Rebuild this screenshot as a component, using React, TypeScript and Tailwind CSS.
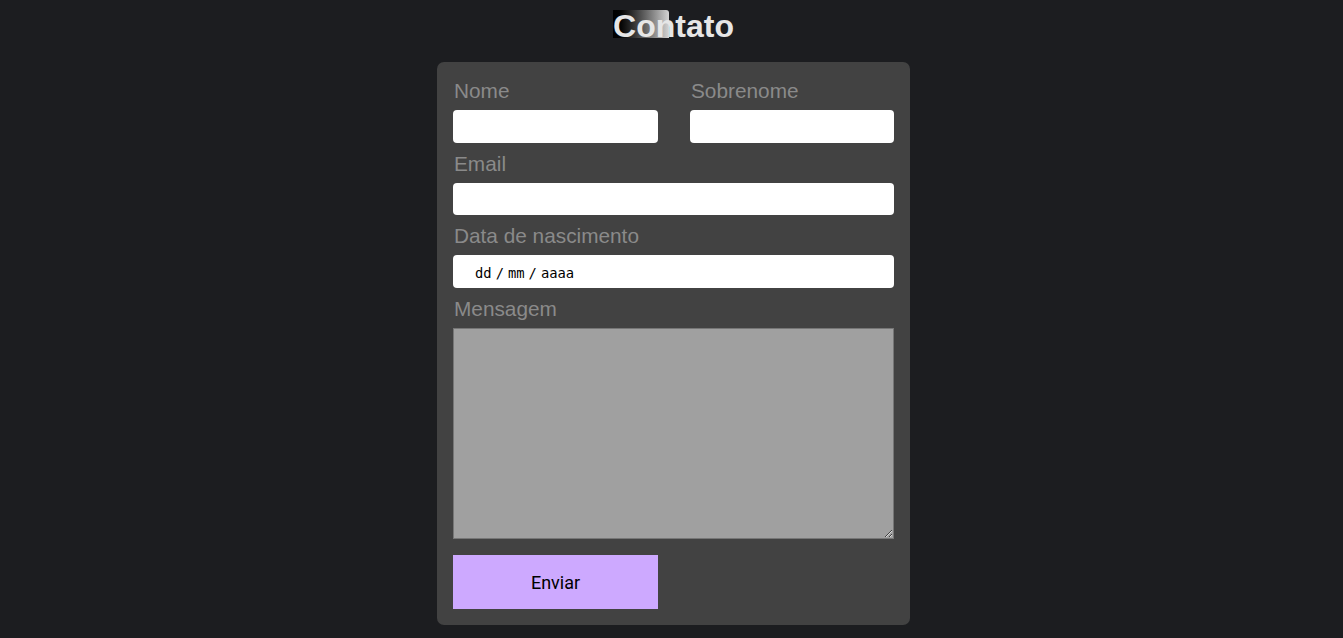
import React from "react";

export default function App() {
  const label = "block text-[20.8px] leading-[24px] text-[#8a8a8a] pt-[1px] mb-[7px] pl-[1px]";
  const input = "block w-full bg-white rounded-[4px] outline-none border-0 px-2";
  return (
    <div
      className="min-h-[638px] w-full bg-[#1c1d20] flex flex-col items-center pl-[4px]"
      style={{ fontFamily: '"Liberation Sans", Arial, sans-serif' }}
    >
      <h1 className="relative mt-[8px] h-[37px] text-[32px] leading-[37px] font-bold text-[#e6e6e6]">
        <span className="absolute left-0 top-[2px] h-[28px] w-[56px] rounded-tr-[3px] bg-gradient-to-r from-black to-[#d4d4d4]" />
        <span className="relative">Contato</span>
      </h1>
      <form
        className="mt-[17px] w-[473px] bg-[#424242] rounded-[7px] px-4 pt-[16px] pb-[16px]"
        onSubmit={(e) => e.preventDefault()}
      >
        <div className="flex gap-[32px]">
          <div className="w-[205px]">
            <label className={label}>Nome</label>
            <input className={input + " h-[33px]"} />
          </div>
          <div className="w-[204px]">
            <label className={label}>Sobrenome</label>
            <input className={input + " h-[33px]"} />
          </div>
        </div>
        <div className="mt-[8px]">
          <label className={label}>Email</label>
          <input className={input + " h-[32px]"} />
        </div>
        <div className="mt-[8px]">
          <label className={label}>Data de nascimento</label>
          <div
            className="flex items-center h-[33px] bg-white rounded-[4px] pl-[22px] pt-[3px] text-[13.8px] text-black"
            style={{ fontFamily: '"DejaVu Sans Mono", monospace' }}
          >
            <span>dd</span>
            <span className="mx-[4px]">/</span>
            <span>mm</span>
            <span className="mx-[4px]">/</span>
            <span>aaaa</span>
          </div>
        </div>
        <div className="mt-[8px]">
          <label className={label}>Mensagem</label>
          <textarea className="block w-full h-[211px] bg-[#a0a0a0] border border-[#767676] resize outline-none" />
        </div>
        <button
          type="submit"
          className="mt-[16px] block w-[205px] h-[54px] bg-[#cda9ff] text-black text-[18px]"
          style={{ fontFamily: 'Roboto, sans-serif' }}
        >
          Enviar
        </button>
      </form>
    </div>
  );
}
